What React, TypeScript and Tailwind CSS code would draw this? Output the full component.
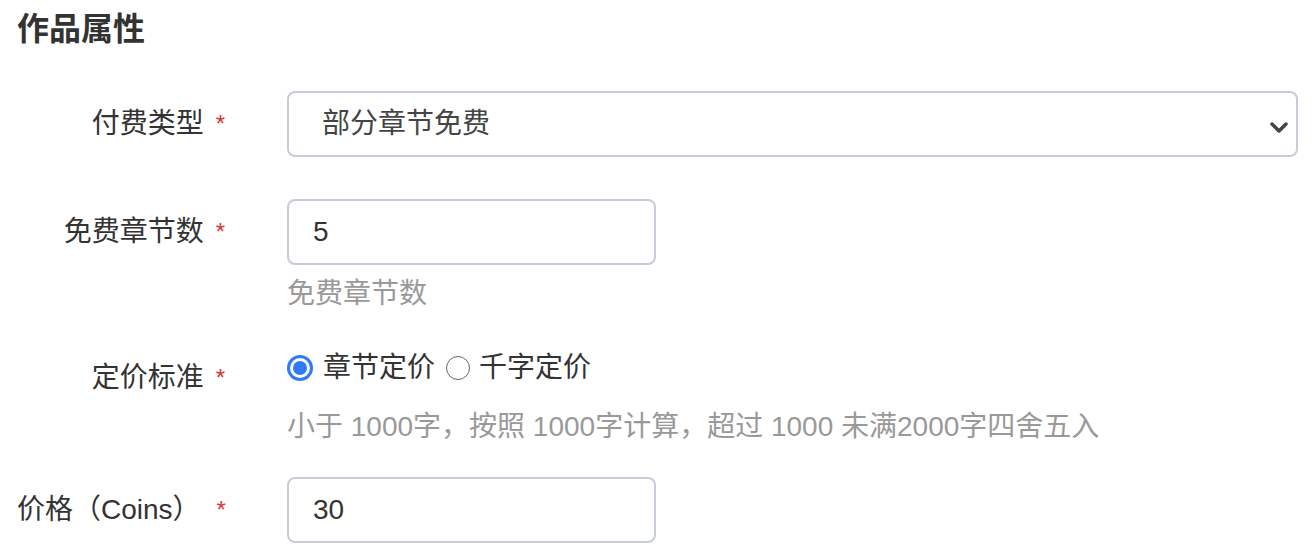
import { useState } from "react";

const font = { fontFamily: '"Liberation Sans", "Noto Sans CJK SC", sans-serif' };

function Label({ text, className = "" }: { text: string; className?: string }) {
  return (
    <div className={`w-[287px] shrink-0 flex items-center justify-end pr-[62px] text-[28px] text-[#333] ${className}`}>
      <span>{text}</span>
      <span className="ml-[12px] text-[24px] text-[#e03131]">*</span>
    </div>
  );
}

export default function App() {
  const [mode, setMode] = useState("chapter");

  return (
    <div className="w-[1312px] h-[560px] bg-white overflow-hidden pt-[7px]" style={font}>
      {/* Title */}
      <h2 className="pl-[17px] text-[32px] leading-[44px] font-bold text-[#333]">作品属性</h2>

      {/* 付费类型 */}
      <div className="flex items-start mt-[40px]">
        <Label text="付费类型" className="h-[66px]" />
        <div className="relative w-[1011px] h-[66px] rounded-[8px] border-2 border-[#c6cdd9] flex items-center pl-[33px] text-[28px] text-[#444]">
          部分章节免费
          <svg className="absolute right-[7px] top-[28px]" width="20" height="14" viewBox="0 0 20 14">
            <path d="M3 3 L10 10 L17 3" fill="none" stroke="#444" strokeWidth="3.5" strokeLinecap="round" strokeLinejoin="round" />
          </svg>
        </div>
      </div>

      {/* 免费章节数 */}
      <div className="flex items-start mt-[42px]">
        <Label text="免费章节数" className="h-[66px]" />
        <div className="flex flex-col">
          <div className="w-[369px] h-[66px] rounded-[8px] border-2 border-[#c6cdd9] flex items-center pl-[24px] text-[28px] text-[#333]">
            5
          </div>
          <div className="mt-[9px] text-[28px] leading-[40px] text-[#999]">免费章节数</div>
        </div>
      </div>

      {/* 定价标准 */}
      <div className="flex items-start mt-[31px]">
        <Label text="定价标准" className="h-[66px]" />
        <div className="flex flex-col">
          <div className="h-[46px] flex items-center text-[28px] text-[#333]">
            <button className="flex items-center" onClick={() => setMode("chapter")}>
              <span
                className={
                  mode === "chapter"
                    ? "w-[26px] h-[26px] rounded-full bg-[#2f7bf5] flex items-center justify-center"
                    : "w-[24px] h-[24px] rounded-full border-[1.5px] border-[#666]"
                }
              >
                {mode === "chapter" && (
                  <span className="w-[20px] h-[20px] rounded-full border-[3px] border-white bg-[#2f7bf5]" />
                )}
              </span>
              <span className="ml-[10px]">章节定价</span>
            </button>
            <button className="flex items-center ml-[11px]" onClick={() => setMode("thousand")}>
              <span
                className={
                  mode === "thousand"
                    ? "w-[26px] h-[26px] rounded-full bg-[#2f7bf5] flex items-center justify-center"
                    : "w-[24px] h-[24px] rounded-full border-[1.5px] border-[#666]"
                }
              >
                {mode === "thousand" && (
                  <span className="w-[20px] h-[20px] rounded-full border-[3px] border-white bg-[#2f7bf5]" />
                )}
              </span>
              <span className="ml-[9px]">千字定价</span>
            </button>
          </div>
          <div className="mt-[16px] text-[28px] leading-[40px] text-[#999]">
            小于 1000字，按照 1000字计算，超过 1000 未满2000字四舍五入
          </div>
        </div>
      </div>

      {/* 价格 */}
      <div className="flex items-start mt-[30px]">
        <div className="w-[287px] shrink-0 h-[66px] flex items-center pl-[17px] text-[28px] text-[#333]">
          <span>价格（Coins）</span>
          <span className="ml-[16px] text-[24px] text-[#e03131]">*</span>
        </div>
        <div className="w-[369px] h-[66px] rounded-[8px] border-2 border-[#c6cdd9] flex items-center pl-[24px] text-[28px] text-[#333]">
          30
        </div>
      </div>
    </div>
  );
}
